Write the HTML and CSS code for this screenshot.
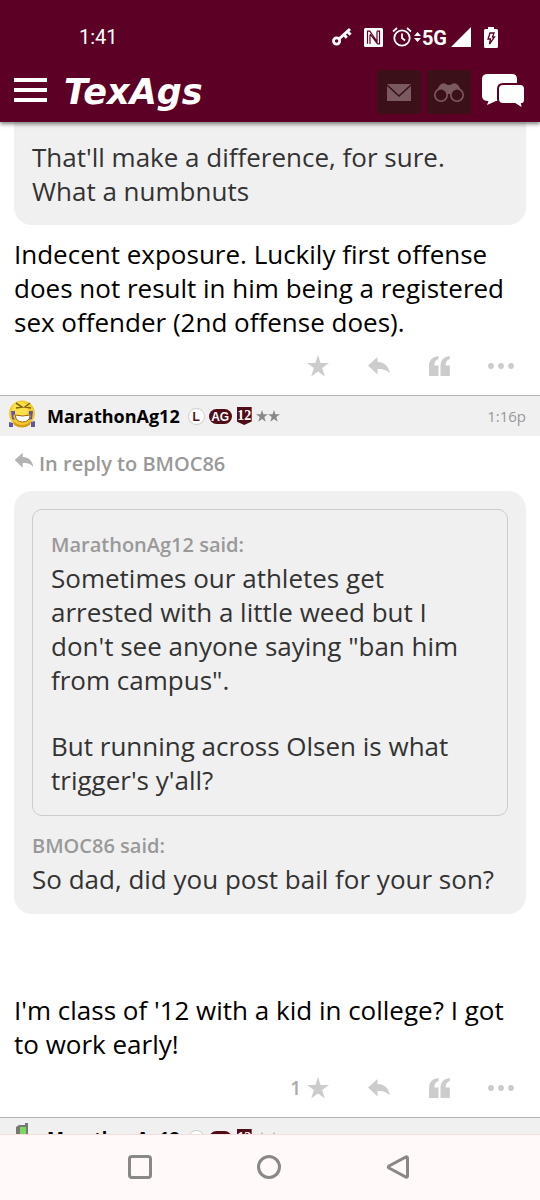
FILE: index.html
```html
<!DOCTYPE html>
<html lang="en">
<head>
<meta charset="utf-8">
<meta name="viewport" content="width=device-width, initial-scale=1">
<title>TexAgs</title>
<link rel="stylesheet" href="styles.css">
</head>
<body>
<svg class="defs" aria-hidden="true">
  <symbol id="star" viewBox="0 0 22 22"><path d="M11 0l2.600 8H22l-6.800 5L17.800 21.500 11 16.500 4.200 21.500l2.600-8.500L0 8h8.400z"/></symbol>
  <symbol id="reply" viewBox="0 0 22 20"><path d="M0 9.500L9.500 1v5c7 0 11 4 12.500 11.500C19.500 14.200 15 12.500 9.500 13v5.500z"/></symbol>
  <symbol id="quote" viewBox="0 0 22 20"><path d="M9.500 0v3C6.700 4.300 5.500 5.500 5.500 9.500H9.500V20H0V10C0 4 3.500.8 9.500 0zM20.800 0v3c-2.800 1.300-4 2.500-4 6.500H20.800V20h-9.300V10c0-6 3.300-9.200 9.300-10z"/></symbol>
  <symbol id="dots" viewBox="0 0 26 6"><circle cx="3" cy="3" r="2.900"/><circle cx="13" cy="3" r="2.900"/><circle cx="23" cy="3" r="2.900"/></symbol>
</svg>

<header class="top">
  <div class="status">
    <span class="clock">1:41</span>
    <div class="signals">
      <svg class="key" width="20" height="20" viewBox="0 0 20 20"><circle cx="4.600" cy="14" r="3.100" fill="none" stroke="#fff" stroke-width="2.800"/><path d="M7 12L18 2M12 7.800l2.800 3M15.500 4.500l3 3.200" fill="none" stroke="#fff" stroke-width="3"/></svg>
      <svg class="nfc" width="19" height="19" viewBox="0 0 19 19"><rect width="19" height="19" rx="1.500" fill="#fff"/><path d="M3.500 15.800V3.200h2.300L13 13.500V3.200M6 7v9M13 3.200h2.500v12.600h-2L6 6" fill="none" stroke="#5c0025" stroke-width="1.200"/></svg>
      <svg class="alarm" width="20" height="20" viewBox="0 0 20 20"><circle cx="10" cy="11" r="7.700" fill="none" stroke="#fff" stroke-width="1.800"/><path d="M1 4.500L5 1M19 4.500L15 1M10 6.500V11l3 2.500" fill="none" stroke="#fff" stroke-width="1.700"/></svg>
      <svg class="updown" width="7" height="10" viewBox="0 0 7 10"><path d="M0 4l3.500-4L7 4zM0 6h7l-3.500 4z" fill="#fff"/></svg>
      <span class="network">5G</span>
      <svg class="bars" width="20" height="20" viewBox="0 0 21 21"><path d="M21 0v21H0z" fill="#fff"/></svg>
      <svg class="battery" width="14" height="21" viewBox="0 0 14 21"><path d="M4 0h6v2h2.500q1.500 0 1.500 1.500v16q0 1.500-1.500 1.500h-11Q0 21 0 19.500v-16Q0 2 1.500 2H4z" fill="#fff"/><path d="M6 6h4l-1.500 4H10.500l-5 7 1-5H4z" fill="none" stroke="#5c0025" stroke-width="1.300"/></svg>
    </div>
  </div>
  <div class="bar">
    <button class="menu" aria-label="Menu"><span></span><span></span><span></span></button>
    <a class="logo" href="#">TexAgs</a>
    <div class="tools">
      <button class="tool" aria-label="Messages"><svg width="24" height="17" viewBox="0 0 24 17"><path d="M0 0h24L12 11zM0 2l12 11L24 2v15H0z" fill="#7b5960"/></svg></button>
      <button class="tool" aria-label="Watched"><svg width="30" height="19" viewBox="0 0 30 19"><path d="M1 10L6 2q3-3 6-1l1.500 1h3L18 1q3-2 6 1l5 8v4H18l-1-3h-4l-1 3H1z" fill="#7b5960"/><g fill="#3b1018" stroke="#7b5960" stroke-width="1.600"><circle cx="7" cy="12" r="6.200"/><circle cx="23" cy="12" r="6.200"/></g></svg></button>
      <button class="chat" aria-label="Forums"><svg width="44" height="35" viewBox="0 0 44 35"><path d="M6 0h24q5 0 5 5v17q0 5-5 5H14l-9 4 1.500-4Q0 27 0 22V5q0-5 6-5z" fill="#fff"/><path d="M21 10h17q5 0 5 5v10q0 5-3 5l1 5-8-5H21q-5 0-5-5V15q0-5 5-5z" fill="#fff" stroke="#5c0025" stroke-width="2"/></svg></button>
    </div>
  </div>
</header>

<main class="thread">
  <article class="post">
    <blockquote class="quote quote-tail">
      <p>That'll make a difference, for sure.<br>What a numbnuts</p>
    </blockquote>
    <p class="body">Indecent exposure. Luckily first offense does not result in him being a registered sex offender (2nd offense does).</p>
    <div class="actions">
      <button aria-label="Star"><svg width="22" height="22"><use href="#star"/></svg></button>
      <button aria-label="Reply"><svg width="22" height="20"><use href="#reply"/></svg></button>
      <button aria-label="Quote"><svg width="22" height="20"><use href="#quote"/></svg></button>
      <button aria-label="More"><svg width="26" height="6"><use href="#dots"/></svg></button>
    </div>
  </article>

  <article class="post">
    <div class="byline">
      <svg class="avatar" width="28" height="28" viewBox="0 0 28 28"><circle cx="14" cy="13.500" r="13" fill="#f2cb2e"/><circle cx="12" cy="10" r="8" fill="#fae14a"/><path d="M5 21q9 8 18 0l-1 4q-8 5-16 0z" fill="#d99a16"/><path d="M8 3l6 4-6 1M22 3l-5 4 6 1" fill="none" stroke="#876510" stroke-width="1.600"/><path d="M7 15q8 2 15 0 0 7-7.500 7Q8 22 7 15z" fill="#fff" stroke="#a26313"/><path d="M3 11h4v3l-2 2 2 4-3-1zM25 11h-4v3l2 2-2 4 3-1zM1 22l4 1v4H1zM23 22l4-1v6h-4z" fill="#6155a5"/></svg>
      <a class="author" href="#">MarathonAg12</a>
      <span class="badges">
        <span class="badge-l">L</span><span class="badge-ag">AG</span><span class="badge-12">12</span>
        <svg class="rank" width="24" height="12" viewBox="0 0 44 22"><use href="#star" width="22" height="22"/><use href="#star" x="22" width="22" height="22"/></svg>
      </span>
      <time>1:16p</time>
    </div>
    <a class="reply-to" href="#"><svg width="20" height="17" viewBox="0 0 22 20"><use href="#reply"/></svg>In reply to BMOC86</a>
    <blockquote class="quote">
      <blockquote class="inner">
        <cite>MarathonAg12 said:</cite>
        <p>Sometimes our athletes get arrested with a little weed but I don't see anyone saying "ban him from campus".</p>
        <p class="next">But running across Olsen is what trigger's y'all?</p>
      </blockquote>
      <cite>BMOC86 said:</cite>
      <p>So dad, did you post bail for your son?</p>
    </blockquote>
    <p class="body body-late">I'm class of '12 with a kid in college? I got to work early!</p>
    <div class="actions">
      <button aria-label="Star"><span>1</span><svg width="22" height="22"><use href="#star"/></svg></button>
      <button aria-label="Reply"><svg width="22" height="20"><use href="#reply"/></svg></button>
      <button aria-label="Quote"><svg width="22" height="20"><use href="#quote"/></svg></button>
      <button aria-label="More"><svg width="26" height="6"><use href="#dots"/></svg></button>
    </div>
  </article>

  <article class="post">
    <div class="byline">
      <svg class="avatar" width="28" height="28" viewBox="0 0 28 28"><path d="M8 5l3-2h6V1h3v27H8z" fill="#777"/><rect x="12" y="5" width="6" height="12" fill="#7fd65d"/></svg>
      <a class="author" href="#">MarathonAg12</a>
      <span class="badges">
        <span class="badge-l">L</span><span class="badge-ag">AG</span><span class="badge-12">12</span>
        <svg class="rank" width="24" height="12" viewBox="0 0 44 22"><use href="#star" width="22" height="22"/><use href="#star" x="22" width="22" height="22"/></svg>
      </span>
      <time>1:18p</time>
    </div>
  </article>
</main>

<nav class="system">
  <button aria-label="Recent apps"><svg width="26" height="26" viewBox="0 0 26 26"><rect x="2.500" y="2.500" width="21" height="21" rx="2.500"/></svg></button>
  <button aria-label="Home"><svg width="26" height="26" viewBox="0 0 26 26"><circle cx="13" cy="13" r="10.500"/></svg></button>
  <button aria-label="Back"><svg width="26" height="26" viewBox="0 0 26 26"><path d="M22.500 4v18q0 1.500-1.500 1L4 14q-1.500-1 0-2L21 3q1.500-.5 1.500 1z"/></svg></button>
</nav>
</body>
</html>
```
FILE: styles.css
```css
* { box-sizing: border-box; }

body {
  margin: 0;
  height: 100vh;
  display: flex;
  flex-direction: column;
  background: #fff;
  color: #1b1b1b;
  font-family: "Open Sans", "Noto Sans", sans-serif;
}

button {
  margin: 0;
  padding: 0;
  border: 0;
  background: none;
  font-family: inherit;
}

p, blockquote { margin: 0; }
a { color: inherit; text-decoration: none; }
svg { display: block; flex-shrink: 0; }
.defs { position: absolute; width: 0; height: 0; }

/* Header */
.top {
  flex-shrink: 0;
  position: relative;
  background: #5c0025;
  color: #fff;
  box-shadow: 0 2px 4px rgba(0, 0, 0, 0.5);
}

.status {
  display: flex;
  align-items: center;
  justify-content: space-between;
  padding: 25px 42px 0 79px;
  font-family: Roboto, sans-serif;
}

.clock { font-size: 20px; line-height: 24px; }
.signals { display: flex; align-items: center; }
.nfc { margin-left: 12px; }
.alarm { margin-left: 9px; }
.updown { margin-left: 2px; }
.network { margin-left: 1px; padding-top: 3px; font-size: 20px; font-weight: 700; line-height: 21px; }
.bars { margin-left: 4px; }
.battery { margin-left: 13px; }

.bar {
  display: flex;
  align-items: center;
  padding: 21px 14px 8px 14px;
}

.menu { display: grid; gap: 6px; width: 33px; padding-bottom: 4px; }
.menu span { height: 4px; background: #fff; }

.logo {
  margin-left: 17px;
  font: italic bold 35px/44px "DejaVu Sans", sans-serif;
}

.tools { display: flex; gap: 6px; margin-left: auto; }

.tool {
  display: grid;
  place-items: center;
  width: 44px;
  height: 44px;
  border-radius: 2px;
  background: #3b1018;
}

.chat { margin-left: 5px; padding-top: 4px; align-self: start; }

/* Thread */
.thread { flex: 1; min-height: 0; overflow: hidden; }

.quote {
  margin: 0 14px;
  padding: 18px;
  border-radius: 18px;
  background: #f0f0f0;
  color: #333;
  font-size: 26px;
  line-height: 34px;
}

.quote-tail {
  padding-bottom: 17px;
  border-radius: 0 0 18px 18px;
}

.inner {
  margin-bottom: 13px;
  padding: 18px;
  border: 1px solid #ccc;
  border-radius: 10px;
}

.next { margin-top: 32px; }

cite {
  display: block;
  color: #999;
  font-size: 20px;
  font-style: normal;
  font-weight: 600;
  line-height: 33px;
}

.body {
  padding: 12px 14px 0;
  color: #000;
  font-size: 26px;
  line-height: 34px;
}

.body-late { padding-top: 79px; }

.actions {
  display: flex;
  justify-content: flex-end;
  padding: 0 8px 2px 0;
}

.actions button {
  display: flex;
  align-items: center;
  justify-content: flex-end;
  gap: 6px;
  min-width: 61px;
  height: 54px;
  padding-right: 20px;
  color: #aaa;
  font-size: 19px;
  font-weight: 600;
}

.actions button:last-child { padding-right: 18px; }
.actions svg { fill: #ccc; }

.byline {
  display: flex;
  align-items: center;
  height: 41px;
  padding: 0 14px 0 8px;
  border-top: 1px solid #b3b3b3;
  background: #f0f0f0;
}

.avatar { margin-bottom: 4px; }

.author {
  margin-left: 11px;
  color: #000;
  font-size: 18px;
  font-weight: 700;
}

.badges {
  display: flex;
  align-items: center;
  gap: 4px;
  margin-left: 8px;
}

.badge-l, .badge-ag, .badge-12 {
  display: grid;
  place-items: center;
  font: bold 12px/16px "Liberation Sans", sans-serif;
}

.badge-l {
  width: 17px;
  height: 17px;
  border: 1px solid #ccc;
  border-radius: 50%;
  background: #fff;
  color: #500d18;
}

.badge-ag {
  width: 23px;
  height: 15px;
  border-radius: 8px;
  background: #500d18;
  color: #fff;
}

.badge-12 {
  width: 15px;
  height: 18px;
  margin-left: 1px;
  background: #500d18;
  clip-path: polygon(0 0, 100% 0, 100% 80%, 50% 100%, 0 80%);
  color: #fff;
  font-family: "Liberation Serif", serif;
  font-size: 14px;
}

.rank { fill: #888; }

time { margin-left: auto; color: #999; font-size: 15px; }

.reply-to {
  display: flex;
  align-items: center;
  gap: 5px;
  height: 55px;
  padding: 0 14px;
  color: #999;
  font-size: 20px;
  font-weight: 600;
}

.reply-to svg { margin-bottom: 6px; fill: #b3b3b3; }

/* System navigation */
.system {
  flex-shrink: 0;
  display: flex;
  justify-content: center;
  gap: 103px;
  padding: 19px 2px 20px 0;
  border-top: 1px solid #f6dcda;
  background: #fffaf9;
}

.system svg { fill: none; stroke: #888; stroke-width: 3; }
```
